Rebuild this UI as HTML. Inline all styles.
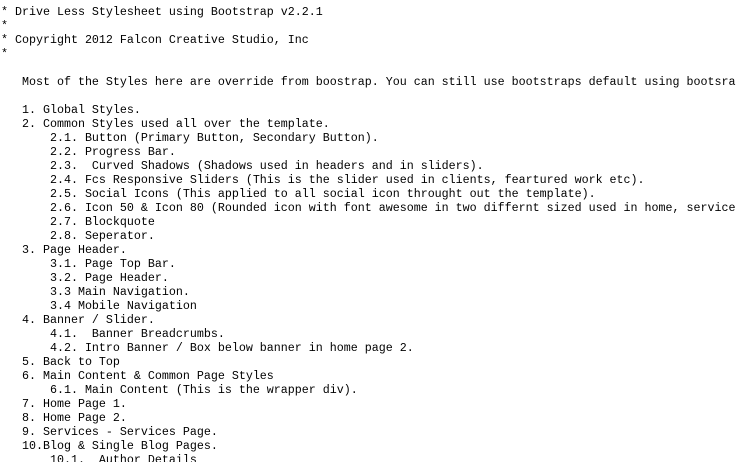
<html><head><style>html,body{margin:0;background:#fff;overflow:hidden;width:736px;height:462px}pre{margin:0;padding:5px 0 0 1px;font:11.67px/14px "Liberation Mono",monospace;color:#000;white-space:pre}</style></head><body><pre>* Drive Less Stylesheet using Bootstrap v2.2.1
*
* Copyright 2012 Falcon Creative Studio, Inc
*

   Most of the Styles here are override from boostrap. You can still use bootstraps default using bootsrap classes

   1. Global Styles.
   2. Common Styles used all over the template.
       2.1. Button (Primary Button, Secondary Button).
       2.2. Progress Bar.
       2.3.  Curved Shadows (Shadows used in headers and in sliders).
       2.4. Fcs Responsive Sliders (This is the slider used in clients, feartured work etc).
       2.5. Social Icons (This applied to all social icon throught out the template).
       2.6. Icon 50 &amp; Icon 80 (Rounded icon with font awesome in two differnt sized used in home, services
       2.7. Blockquote
       2.8. Seperator.
   3. Page Header.
       3.1. Page Top Bar.
       3.2. Page Header.
       3.3 Main Navigation.
       3.4 Mobile Navigation
   4. Banner / Slider.
       4.1.  Banner Breadcrumbs.
       4.2. Intro Banner / Box below banner in home page 2.
   5. Back to Top
   6. Main Content &amp; Common Page Styles
       6.1. Main Content (This is the wrapper div).
   7. Home Page 1.
   8. Home Page 2.
   9. Services - Services Page.
   10.Blog &amp; Single Blog Pages.
       10.1.  Author Details
</pre></body></html>
